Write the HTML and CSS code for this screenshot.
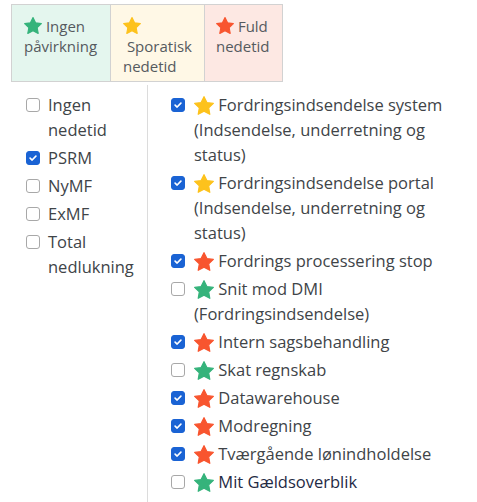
FILE: index.html
```html
<!DOCTYPE html>
<html lang="da">
<head>
<meta charset="utf-8">
<title>Driftsstatus</title>
<link rel="stylesheet" href="styles.css">
</head>
<body>
<svg class="defs" width="0" height="0" aria-hidden="true">
  <defs>
    <polygon id="star" points="12,2.2 15.1,8.5 22,9.4 17,14.2 18.2,21.1 12,17.8 5.8,21.1 7,14.2 2,9.4 8.9,8.5"/>
  </defs>
</svg>
<div class="page">
  <table class="legend">
    <tr>
      <td class="none"><svg class="star green" viewBox="1.3 1.5 21.4 20.3"><use href="#star"/></svg> Ingen<br>påvirkning</td>
      <td class="some"><svg class="star yellow" viewBox="1.3 1.5 21.4 20.3"><use href="#star"/></svg><br>&nbsp;Sporatisk<br>nedetid</td>
      <td class="full"><svg class="star red" viewBox="1.3 1.5 21.4 20.3"><use href="#star"/></svg> Fuld<br>nedetid</td>
    </tr>
  </table>

  <div class="filters">
    <ul class="systems">
      <li class="item"><input type="checkbox" class="check"><span>Ingen nedetid</span></li>
      <li class="item"><input type="checkbox" class="check" checked><span>PSRM</span></li>
      <li class="item"><input type="checkbox" class="check"><span>NyMF</span></li>
      <li class="item"><input type="checkbox" class="check"><span>ExMF</span></li>
      <li class="item"><input type="checkbox" class="check"><span>Total nedlukning</span></li>
    </ul>
    <ul class="services">
      <li class="item"><input type="checkbox" class="check" checked><svg class="star yellow" viewBox="1.3 1.5 21.4 20.3"><use href="#star"/></svg> Fordringsindsendelse system (Indsendelse, underretning og status)</li>
      <li class="item"><input type="checkbox" class="check" checked><svg class="star yellow" viewBox="1.3 1.5 21.4 20.3"><use href="#star"/></svg> Fordringsindsendelse portal (Indsendelse, underretning og status)</li>
      <li class="item"><input type="checkbox" class="check" checked><svg class="star red" viewBox="1.3 1.5 21.4 20.3"><use href="#star"/></svg> Fordrings processering stop</li>
      <li class="item"><input type="checkbox" class="check"><svg class="star green" viewBox="1.3 1.5 21.4 20.3"><use href="#star"/></svg> Snit mod DMI (Fordringsindsendelse)</li>
      <li class="item"><input type="checkbox" class="check" checked><svg class="star red" viewBox="1.3 1.5 21.4 20.3"><use href="#star"/></svg> Intern sagsbehandling</li>
      <li class="item"><input type="checkbox" class="check"><svg class="star green" viewBox="1.3 1.5 21.4 20.3"><use href="#star"/></svg> Skat regnskab</li>
      <li class="item"><input type="checkbox" class="check" checked><svg class="star red" viewBox="1.3 1.5 21.4 20.3"><use href="#star"/></svg> Datawarehouse</li>
      <li class="item"><input type="checkbox" class="check" checked><svg class="star red" viewBox="1.3 1.5 21.4 20.3"><use href="#star"/></svg> Modregning</li>
      <li class="item"><input type="checkbox" class="check" checked><svg class="star red" viewBox="1.3 1.5 21.4 20.3"><use href="#star"/></svg> Tværgående lønindholdelse</li>
      <li class="item dark"><input type="checkbox" class="check"><svg class="star green" viewBox="1.3 1.5 21.4 20.3"><use href="#star"/></svg> Mit Gældsoverblik</li>
    </ul>
  </div>
</div>
</body>
</html>
```

FILE: styles.css
```css
html, body {
  margin: 0;
  padding: 0;
  background: #ffffff;
}

body {
  font-family: "Open Sans", "Noto Sans", "DejaVu Sans", sans-serif;
  color: #404448;
  overflow: hidden;
}

.defs {
  position: absolute;
  width: 0;
  height: 0;
}

.page {
  padding: 4px 0 0 11px;
}

.legend {
  border-collapse: collapse;
  font-size: 15px;
  line-height: 20px;
  color: #555a5e;
}

.legend td {
  border: 1px solid #d2d2d2;
  vertical-align: top;
  padding: 11px 8px 5px 12px;
  height: 59px;
}

.legend .none {
  background: #e4f6ee;
  width: 78px;
}

.legend .some {
  background: #fff8e6;
  width: 73px;
}

.legend .full {
  background: #fde8e3;
  width: 58px;
  padding-left: 11px;
}

.legend .star {
  width: 18px;
  height: 17px;
  vertical-align: -2px;
}

.star {
  width: 20px;
  height: 19px;
  vertical-align: -4px;
  stroke-width: 1.3;
  stroke-linejoin: round;
}

.green { fill: #35b37b; stroke: #35b37b; }
.yellow { fill: #fdc21c; stroke: #fdc21c; }
.red { fill: #f8552f; stroke: #f8552f; }

.filters {
  display: flex;
  margin-left: -11px;
  margin-top: 3px;
  font-size: 16.5px;
  line-height: 25px;
}

.systems,
.services {
  list-style: none;
  margin: 0;
  padding-top: 7px;
  padding-bottom: 20px;
  box-sizing: border-box;
}

.systems {
  width: 147px;
  flex: none;
  padding-left: 48px;
  padding-right: 7px;
}

.services {
  border-left: 1px solid #dcdcdc;
  padding-left: 46px;
  padding-right: 32px;
  flex: 1;
}

.item {
  margin-bottom: 3px;
}

.check {
  appearance: none;
  -webkit-appearance: none;
  float: left;
  width: 14px;
  height: 14px;
  margin: 6px 0 0 -22px;
  border: 1px solid #a8a8a8;
  border-radius: 3px;
  background: #ffffff;
}

.services .check {
  margin-left: -23px;
}

.check:checked {
  border-color: #1a63d4;
  background-color: #1a63d4;
  background-image: url("data:image/svg+xml,%3Csvg xmlns='http://www.w3.org/2000/svg' viewBox='0 0 14 14'%3E%3Cpath d='M3.6 7.2 L6 9.4 L10.4 4.8' fill='none' stroke='%23fff' stroke-width='1.9' stroke-linecap='round' stroke-linejoin='round'/%3E%3C/svg%3E");
  background-size: 100% 100%;
}

.dark {
  color: #1f2a44;
}
```
